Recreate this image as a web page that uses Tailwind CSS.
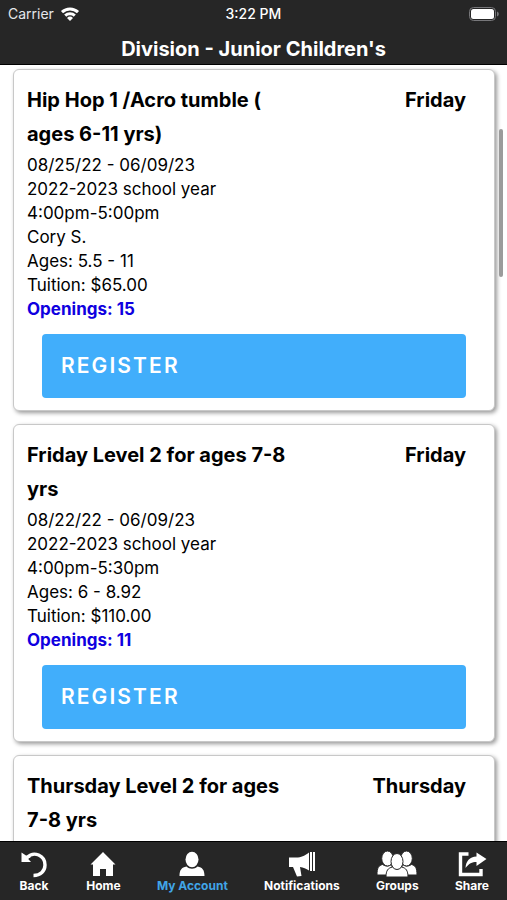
<!DOCTYPE html>
<html lang="en">
<head>
  <meta charset="UTF-8" />
  <meta name="viewport" content="width=device-width, initial-scale=1" />
  <title>Division - Junior Children's</title>
  <script src="https://cdn.jsdelivr.net/npm/@tailwindcss/browser@4"></script>
</head>
<body class="h-screen flex flex-col overflow-hidden bg-white text-black font-['Inter',sans-serif]">
  <!-- Header -->
  <header class="shrink-0 bg-[#262626] text-white border-b border-black">
    <div class="grid grid-cols-3 items-center h-7 px-2 text-sm">
      <div class="flex items-center gap-1 text-gray-200">
        <span>Carrier</span>
        <svg class="w-6 h-4" viewBox="0 0 24 16" fill="none" stroke="#fff" stroke-width="3" aria-hidden="true">
          <path d="M4 6.200a11.500 11.500 0 0 1 16 0" />
          <path d="M7.200 9.700a7 7 0 0 1 9.600 0" />
          <path d="M12 15l-3-3a4.300 4.300 0 0 1 6 0z" fill="#fff" stroke="none" />
        </svg>
      </div>
      <div class="text-center font-medium">3:22 PM</div>
      <div class="flex justify-end">
        <svg class="w-8 h-4" viewBox="0 0 32 16" aria-hidden="true">
          <rect x="2.500" y="1.500" width="26" height="13" rx="4" fill="none" stroke="#77777a" />
          <rect x="4" y="3" width="23" height="10" rx="2.500" fill="#fff" />
          <path d="M30 5.500v5c1.300-.5 1.800-1.500 1.800-2.500s-.5-2-1.800-2.500z" fill="#77777a" />
        </svg>
      </div>
    </div>
    <h1 class="h-9 leading-[42px] text-center text-xl font-bold">Division - Junior Children's</h1>
  </header>

  <!-- Class list -->
  <main class="relative flex-1 min-h-0 overflow-hidden">
    <div class="flex flex-col gap-[13px] pt-1 pl-[13px] pr-3">
      <article class="rounded-md border border-[#c8c8c8] bg-white shadow-[2px_2px_4px_rgba(0,0,0,0.4)] pl-[13px] pr-3 pt-[13px] pb-3">
        <div class="flex justify-between pr-4 text-xl leading-[34px] font-bold">
          <h2 class="w-[270px]">Hip Hop 1 /Acro tumble ( ages 6-11 yrs)</h2>
          <span>Friday</span>
        </div>
        <div class="pt-[2px] leading-6 text-[17px]">
          <p>08/25/22 - 06/09/23</p>
          <p>2022-2023 school year</p>
          <p>4:00pm-5:00pm</p>
          <p>Cory S.</p>
          <p>Ages: 5.5 - 11</p>
          <p>Tuition: $65.00</p>
          <p class="font-bold text-[#0f00e0]">Openings: 15</p>
        </div>
        <div class="pl-[15px] pr-4 pt-[13px]">
          <button class="w-full h-16 rounded-sm bg-[#41aefb] px-[19px] text-left text-[21px] font-semibold tracking-widest text-white">REGISTER</button>
        </div>
      </article>

      <article class="rounded-md border border-[#c8c8c8] bg-white shadow-[2px_2px_4px_rgba(0,0,0,0.4)] pl-[13px] pr-3 pt-[13px] pb-3">
        <div class="flex justify-between pr-4 text-xl leading-[34px] font-bold">
          <h2 class="w-[270px]">Friday Level 2 for ages 7-8 yrs</h2>
          <span>Friday</span>
        </div>
        <div class="pt-[2px] leading-6 text-[17px]">
          <p>08/22/22 - 06/09/23</p>
          <p>2022-2023 school year</p>
          <p>4:00pm-5:30pm</p>
          <p>Ages: 6 - 8.92</p>
          <p>Tuition: $110.00</p>
          <p class="font-bold text-[#0f00e0]">Openings: 11</p>
        </div>
        <div class="pl-[15px] pr-4 pt-[13px]">
          <button class="w-full h-16 rounded-sm bg-[#41aefb] px-[19px] text-left text-[21px] font-semibold tracking-widest text-white">REGISTER</button>
        </div>
      </article>

      <article class="rounded-md border border-[#c8c8c8] bg-white shadow-[2px_2px_4px_rgba(0,0,0,0.4)] pl-[13px] pr-3 pt-[13px] pb-3">
        <div class="flex justify-between pr-4 text-xl leading-[34px] font-bold">
          <h2 class="w-[270px]">Thursday Level 2 for ages 7-8 yrs</h2>
          <span>Thursday</span>
        </div>
      </article>
    </div>
    <!-- Scroll indicator -->
    <div class="absolute right-1 top-16 w-1 h-[148px] rounded-full bg-[#9b9b9b]"></div>
  </main>

  <!-- Tab bar -->
  <nav class="shrink-0 flex justify-between h-[59px] bg-[#262626] border-t border-black px-[18px] pt-2 text-xs leading-4 font-bold text-white">
    <a href="#" class="flex flex-col items-center">
      <svg class="w-8 h-7" viewBox="0 0 32 28" aria-hidden="true">
        <path d="M9 7.500C16 .5 27 5.500 27 15c0 6-4.500 10.500-11.500 10.500" fill="none" stroke="#fff" stroke-width="3.400" />
        <path d="M3.500 2.500v9.500h9.500l-3-3.200L13 7l-5-1.500z" fill="#fff" />
      </svg>
      <span>Back</span>
    </a>
    <a href="#" class="flex flex-col items-center">
      <svg class="w-8 h-7" viewBox="0 0 32 28" fill="#fff" aria-hidden="true">
        <path d="M16 2l12.500 12.500H26V26h-7v-7h-6v7H6V14.500H3.500z" />
      </svg>
      <span>Home</span>
    </a>
    <a href="#" class="flex flex-col items-center text-[#41a5e6]">
      <svg class="w-8 h-7" viewBox="0 0 32 28" fill="#fff" aria-hidden="true">
        <ellipse cx="16" cy="9.500" rx="6.500" ry="7.700" />
        <path d="M3.500 26c0-6 2-8.500 7-9.500 3 3 8 3 11 0 5 1 7 3.500 7 9.500z" />
      </svg>
      <span>My Account</span>
    </a>
    <a href="#" class="flex flex-col items-center">
      <svg class="w-8 h-7" viewBox="0 0 32 28" fill="#fff" aria-hidden="true">
        <path d="M3 7.500h9c5-.5 7.500-2.500 11-5v18c-3-2-5.500-3-9-3.500l1.500 9-4.500.5-4-9.500H3z" />
        <path d="M24 2h2v19h-2zM27 2h2v19h-2z" />
      </svg>
      <span>Notifications</span>
    </a>
    <a href="#" class="flex flex-col items-center">
      <svg class="w-10 h-7" viewBox="0 0 40 28" fill="#fff" stroke="#262626" stroke-width="1" aria-hidden="true">
        <path d="M0 25c0-7 1.500-9.500 5.500-10.500 3 2 6 2 9 0l3 10.500z" />
        <path d="M40 25c0-7-1.500-9.500-5.500-10.500-3 2-6 2-9 0l-3 10.500z" />
        <ellipse cx="10.500" cy="8.500" rx="5.800" ry="7.500" />
        <ellipse cx="29.500" cy="8.500" rx="5.800" ry="7.500" />
        <path d="M9 27c0-6.500 2-9 6.500-10 3 2.500 6 2.500 9 0 4.500 1 6.500 3.500 6.500 10z" />
        <ellipse cx="20" cy="11.500" rx="6" ry="8" />
      </svg>
      <span>Groups</span>
    </a>
    <a href="#" class="flex flex-col items-center">
      <svg class="w-8 h-7" viewBox="0 0 32 28" fill="#fff" aria-hidden="true">
        <path d="M12.500 4H4.500v20.500h20.500V19" fill="none" stroke="#fff" stroke-width="3.400" />
        <path d="M20.500 2.500L30.500 9l-10 7v-4C16 12 13 13.500 9.500 18c.5-7 4-11 11-11.500z" />
      </svg>
      <span>Share</span>
    </a>
  </nav>
</body>
</html>
